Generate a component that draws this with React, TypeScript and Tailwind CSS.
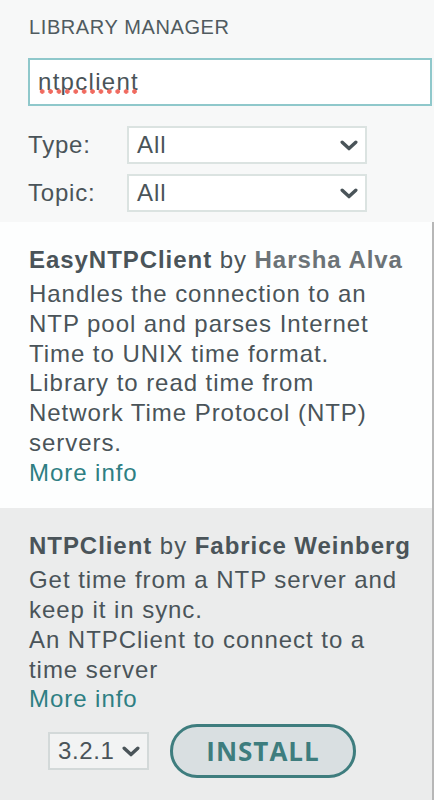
import React from 'react';

function Chevron({ className }: { className?: string }) {
  return (
    <svg viewBox="0 0 18 11" className={className} fill="none">
      <path d="M2.2 2.2 L9 8.6 L15.8 2.2" stroke="#4a5459" strokeWidth="3.4" strokeLinecap="round" strokeLinejoin="round" />
    </svg>
  );
}

function FilterSelect({ label }: { label: string }) {
  return (
    <div className="flex items-center">
      <div className="w-[99px] text-[24px] leading-[28px] tracking-[0.8px]">{label}</div>
      <div className="w-[240px] h-[38px] border-2 border-[#dbe3e1] bg-white flex items-center justify-between pl-[8px] pr-[7px]">
        <span className="text-[24px] leading-[28px] tracking-[1px]">All</span>
        <Chevron className="w-[18px] h-[11px]" />
      </div>
    </div>
  );
}

export default function App() {
  return (
    <div className="w-[434px] h-[800px] overflow-hidden bg-[#f7f8f8] text-[#4a5459] font-['Liberation_Sans',Arial,sans-serif]">
      {/* Header */}
      <div className="pl-[28px] pr-[2px] pt-[15px] pb-[10px]">
        <div className="text-[20px] leading-[24px] tracking-[0.6px] text-[#505b60] pl-[1px]">LIBRARY MANAGER</div>
        <div className="mt-[19px] h-[48px] border-2 border-[#8fc8cb] bg-white flex items-center pl-[8px]">
          <span className="relative text-[24px] leading-[28px] tracking-[1.3px]">
            ntpclient
            <span className="absolute left-0 right-[2px] top-[21px] h-[5px] bg-[radial-gradient(circle,#f06a5f_2px,transparent_2.5px)] bg-[length:8.4px_5px] bg-repeat-x"></span>
          </span>
        </div>
        <div className="mt-[20px] flex flex-col gap-[10px]">
          <FilterSelect label="Type:" />
          <FilterSelect label="Topic:" />
        </div>
      </div>

      {/* Results */}
      <div className="flex h-[578px]">
        <div className="flex-1 flex flex-col text-[24px] tracking-[0.95px]">
          <div className="bg-[#fdfefe] pt-[23px] pl-[29px] pr-[16px] pb-[21px]">
            <div className="leading-[30px] mb-[4px] whitespace-nowrap">
              <span className="font-bold">EasyNTPClient</span> by{' '}
              <span className="font-bold text-[#6c7377]">Harsha Alva</span>
            </div>
            <div className="leading-[29.75px]">
              Handles the connection to an NTP pool and parses Internet Time to UNIX time format.
              <br />
              Library to read time from Network Time Protocol (NTP) servers.
            </div>
            <div className="leading-[29.75px] text-[#2e7f83]">More info</div>
          </div>

          <div className="flex-1 bg-[#ebecec] pt-[23px] pl-[29px] pr-[16px]">
            <div className="leading-[30px] mb-[4px] whitespace-nowrap">
              <span className="font-bold">NTPClient</span> by{' '}
              <span className="font-bold">Fabrice Weinberg</span>
            </div>
            <div className="leading-[29.75px]">
              Get time from a NTP server and keep it in sync.
              <br />
              An NTPClient to connect to a time server
            </div>
            <div className="leading-[29.75px] text-[#2e7f83]">More info</div>
            <div className="mt-[10px] flex items-center">
              <div className="ml-[19px] w-[101px] h-[38px] border-2 border-[#d3d9d9] bg-[#f2f3f3] flex items-center justify-between pl-[8px] pr-[7px]">
                <span className="leading-[28px] tracking-[0.6px]">3.2.1</span>
                <Chevron className="w-[18px] h-[11px]" />
              </div>
              <button className="ml-[21px] w-[186px] h-[54px] rounded-full border-[3px] border-[#3e7d7e] bg-[#d9dfe1] text-[#3e7d7e] font-['Open_Sans',sans-serif] font-bold text-[26px] tracking-[1px] leading-none">
                INSTALL
              </button>
            </div>
          </div>
        </div>
        <div className="w-[2px] bg-[#b7b7b7]"></div>
      </div>
    </div>
  );
}
